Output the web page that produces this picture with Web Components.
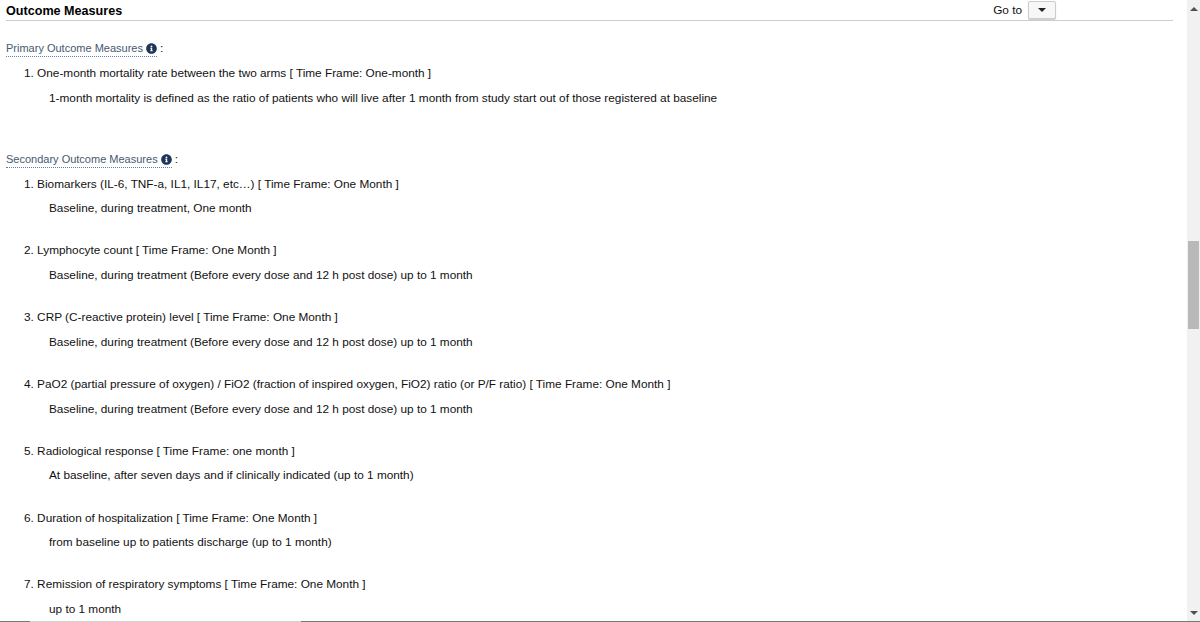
<!DOCTYPE html>
<html>
<head>
<meta charset="utf-8">
<style>
  html, body { margin: 0; height: 100%; overflow: hidden; background: #fff; }
  body { font-family: "Liberation Sans", Arial, sans-serif; font-size: 11.8px; color: #111; }
</style>
</head>
<body>
<study-page>
  <section-head slot="head">Outcome Measures</section-head>
  <measure-group label="Primary Outcome Measures">
    <measure-item n="1" title-text="One-month mortality rate between the two arms [ Time Frame: One-month ]">1-month mortality is defined as the ratio of patients who will live after 1 month from study start out of those registered at baseline</measure-item>
  </measure-group>
  <measure-group label="Secondary Outcome Measures">
    <measure-item n="1" title-text="Biomarkers (IL-6, TNF-a, IL1, IL17, etc…) [ Time Frame: One Month ]">Baseline, during treatment, One month</measure-item>
    <measure-item n="2" title-text="Lymphocyte count [ Time Frame: One Month ]">Baseline, during treatment (Before every dose and 12 h post dose) up to 1 month</measure-item>
    <measure-item n="3" title-text="CRP (C-reactive protein) level [ Time Frame: One Month ]">Baseline, during treatment (Before every dose and 12 h post dose) up to 1 month</measure-item>
    <measure-item n="4" title-text="PaO2 (partial pressure of oxygen) / FiO2 (fraction of inspired oxygen, FiO2) ratio (or P/F ratio) [ Time Frame: One Month ]">Baseline, during treatment (Before every dose and 12 h post dose) up to 1 month</measure-item>
    <measure-item n="5" title-text="Radiological response [ Time Frame: one month ]">At baseline, after seven days and if clinically indicated (up to 1 month)</measure-item>
    <measure-item n="6" title-text="Duration of hospitalization [ Time Frame: One Month ]">from baseline up to patients discharge (up to 1 month)</measure-item>
    <measure-item n="7" title-text="Remission of respiratory symptoms [ Time Frame: One Month ]">up to 1 month</measure-item>
  </measure-group>
</study-page>

<script>
class StudyPage extends HTMLElement {
  constructor() {
    super();
    this.attachShadow({ mode: "open" });
    this.shadowRoot.innerHTML = `
      <style>
        :host { display: flex; height: 622px; overflow: hidden; position: relative; }
        .content { flex: 1; min-width: 0; overflow: hidden; padding: 0 14px 0 6px; }
        .bar { width: 13px; flex: none; background: #f1f1f1; display: flex; flex-direction: column; align-items: center; height: 621px; }
        .arrow { height: 17px; display: flex; align-items: center; justify-content: center; flex: none; }
        .up { width: 0; height: 0; border: 4px solid transparent; border-top: 0; border-bottom: 4px solid #505050; }
        .down { width: 0; height: 0; border: 4px solid transparent; border-bottom: 0; border-top: 4px solid #505050; }
        .track { flex: 1; display: flex; flex-direction: column; }
        .gap { height: 224px; flex: none; }
        .thumb { height: 88px; width: 11px; background: #b9b9b9; flex: none; }
        .edge { position: absolute; left: 0; right: 0; bottom: 0; height: 1px; background: linear-gradient(to right, #777 30px, #d0d0d0 30px, #d0d0d0 301px, #777 301px); }
      </style>
      <div class="content">
        <slot name="head"></slot>
        <slot></slot>
      </div>
      <div class="bar">
        <div class="arrow"><div class="up"></div></div>
        <div class="track"><div class="gap"></div><div class="thumb"></div></div>
        <div class="arrow"><div class="down"></div></div>
      </div>
      <div class="edge"></div>
    `;
  }
}
customElements.define("study-page", StudyPage);

class SectionHead extends HTMLElement {
  constructor() {
    super();
    this.attachShadow({ mode: "open" });
    this.shadowRoot.innerHTML = `
      <style>
        :host { display: flex; align-items: center; justify-content: space-between; height: 20px; border-bottom: 1px solid #ccc; }
        .title { font-weight: bold; font-size: 12.6px; color: #000; margin-top: 1px; }
        .goto { display: flex; align-items: center; gap: 6px; margin-right: 117px; }
        button { width: 28px; height: 18px; margin: 0; padding: 0; border: 1px solid #ccc; border-radius: 2px; background: #f7f7f7; box-shadow: 0 1px 1px #ccc; display: flex; align-items: center; justify-content: center; }
        i { width: 0; height: 0; border: 4px solid transparent; border-bottom: 0; border-top: 4px solid #222; }
      </style>
      <span class="title"><slot></slot></span>
      <span class="goto">Go to <button><i></i></button></span>
    `;
  }
}
customElements.define("section-head", SectionHead);

class MeasureGroup extends HTMLElement {
  constructor() {
    super();
    this.attachShadow({ mode: "open" });
    this.shadowRoot.innerHTML = `
      <style>
        :host { display: block; padding-top: 20px; padding-bottom: 7.9px; }
        .label { line-height: 15px; display: flex; align-items: flex-start; gap: 3px; }
        .term { border-bottom: 1px dotted #5b7fb0; color: #46586f; font-size: 11px; display: inline-flex; align-items: center; gap: 3px; }
        svg { width: 11px; height: 11px; display: block; }
      </style>
      <div class="label">
        <span class="term"><span class="name"></span><svg viewBox="0 0 512 512"><path fill="#1d3557" d="M256 8C119 8 8 119 8 256s111 248 248 248 248-111 248-248S393 8 256 8zm0 110a42 42 0 1 1 0 84 42 42 0 0 1 0-84zm56 254c0 7-5 12-12 12h-88c-7 0-12-5-12-12v-24c0-7 5-12 12-12h12v-64h-12c-7 0-12-5-12-12v-24c0-7 5-12 12-12h64c7 0 12 5 12 12v100h12c7 0 12 5 12 12v24z"/></svg></span>
        <span>:</span>
      </div>
      <slot></slot>
    `;
    this.shadowRoot.querySelector(".name").textContent = this.getAttribute("label");
  }
}
customElements.define("measure-group", MeasureGroup);

class MeasureItem extends HTMLElement {
  constructor() {
    super();
    this.attachShadow({ mode: "open" });
    this.shadowRoot.innerHTML = `
      <style>
        :host { display: block; padding-left: 18px; padding-bottom: 18.3px; }
        .head { line-height: 16px; padding-top: 8px; }
        .desc { padding-left: 25px; line-height: 16px; padding-top: 8.5px; }
      </style>
      <div class="head"></div>
      <div class="desc"><slot></slot></div>
    `;
    this.shadowRoot.querySelector(".head").textContent = this.getAttribute("n") + ". " + this.getAttribute("title-text");
  }
}
customElements.define("measure-item", MeasureItem);
</script>
</body>
</html>
